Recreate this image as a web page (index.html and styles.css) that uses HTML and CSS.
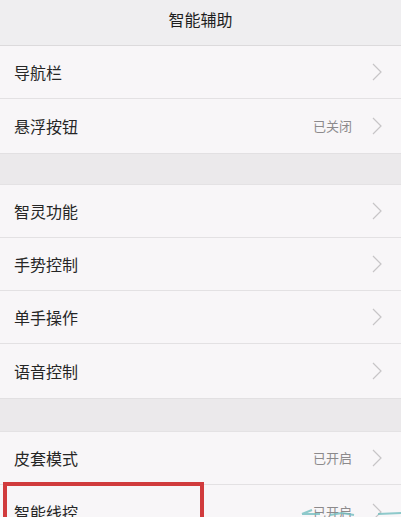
FILE: index.html
```html
<!DOCTYPE html>
<html lang="zh-CN">
<head>
<meta charset="utf-8">
<title>智能辅助</title>
<link rel="stylesheet" href="styles.css">
</head>
<body>
<div class="screen">
  <header class="title-bar">智能辅助</header>

  <section class="group">
    <div class="row"><span class="label">导航栏</span><span class="right"><svg class="chev" viewBox="0 0 10 18"><polyline points="1,1 9,9 1,17"/></svg></span></div>
    <div class="row"><span class="label">悬浮按钮</span><span class="right"><span class="value">已关闭</span><svg class="chev" viewBox="0 0 10 18"><polyline points="1,1 9,9 1,17"/></svg></span></div>
  </section>

  <div class="gap"></div>

  <section class="group">
    <div class="row"><span class="label">智灵功能</span><span class="right"><svg class="chev" viewBox="0 0 10 18"><polyline points="1,1 9,9 1,17"/></svg></span></div>
    <div class="row"><span class="label">手势控制</span><span class="right"><svg class="chev" viewBox="0 0 10 18"><polyline points="1,1 9,9 1,17"/></svg></span></div>
    <div class="row"><span class="label">单手操作</span><span class="right"><svg class="chev" viewBox="0 0 10 18"><polyline points="1,1 9,9 1,17"/></svg></span></div>
    <div class="row"><span class="label">语音控制</span><span class="right"><svg class="chev" viewBox="0 0 10 18"><polyline points="1,1 9,9 1,17"/></svg></span></div>
  </section>

  <div class="gap gap-lg"></div>

  <section class="group">
    <div class="row"><span class="label">皮套模式</span><span class="right"><span class="value">已开启</span><svg class="chev" viewBox="0 0 10 18"><polyline points="1,1 9,9 1,17"/></svg></span></div>
    <div class="row"><span class="label">智能线控</span><span class="right"><span class="value">已开启</span><svg class="chev" viewBox="0 0 10 18"><polyline points="1,1 9,9 1,17"/></svg></span></div>
  </section>

  <div class="highlight"></div>
  <svg class="watermark" viewBox="0 0 120 10"><path d="M20 7 L30 3 M20 7 L38 7 M48 8 L60 6 L72 8 M96 7 L120 6"/></svg>
</div>
</body>
</html>
```

FILE: styles.css
```css
* { box-sizing: border-box; }
html, body { margin: 0; padding: 0; }
body {
  background: #f8f6f8;
  font-family: "Noto Sans CJK SC", "Noto Sans", sans-serif;
  color: #262626;
}
.screen {
  position: relative;
  width: 401px;
  height: 517px;
  overflow: hidden;
  background: #f8f6f8;
}
.title-bar {
  height: 46px;
  border-bottom: 1px solid #dcdadc;
  background: #efeef0;
  display: flex;
  align-items: center;
  justify-content: center;
  font-size: 16px;
  color: #1e1e1e;
  padding-bottom: 7px;
}
.group { background: #f8f6f8; }
.row {
  height: 53.3px;
  display: flex;
  align-items: center;
  justify-content: space-between;
  padding: 0 19px 0 14px;
  border-bottom: 1px solid #e3e1e3;
}
.group .row:last-child { border-bottom: none; }
.label {
  font-size: 16px;
  color: #262626;
  letter-spacing: 0;
}
.right {
  display: flex;
  align-items: center;
  gap: 20px;
}
.value {
  font-size: 13px;
  color: #8c8a8c;
}
.chev {
  width: 10px;
  height: 18px;
  fill: none;
  stroke: #c7c5c7;
  stroke-width: 1.2;
}
.gap {
  height: 32px;
  background: #ebe9eb;
  border-top: 1px solid #e2e0e2;
  border-bottom: 1px solid #e4e2e4;
}
.gap-lg { height: 34px; }
.highlight {
  position: absolute;
  left: 3px;
  top: 482px;
  width: 201px;
  height: 60px;
  border: 4px solid #d13b3d;
}
.watermark {
  position: absolute;
  left: 282px;
  top: 507px;
  width: 120px;
  height: 10px;
  fill: none;
  stroke: #74bfc0;
  stroke-width: 2;
  opacity: 0.8;
}
```
